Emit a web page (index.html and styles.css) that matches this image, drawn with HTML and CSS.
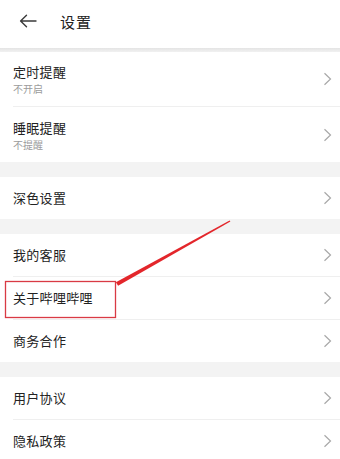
FILE: index.html
```html
<!DOCTYPE html>
<html lang="zh-CN">
<head>
<meta charset="utf-8">
<title>设置</title>
<link rel="stylesheet" href="styles.css">
</head>
<body>
<div class="page">
  <header class="header">
    <svg class="back" width="18" height="14" viewBox="0 0 18 14"><path d="M17 7H1.8M7.5 1.2L1.6 7l5.9 5.8" fill="none" stroke="#3a3a3a" stroke-width="1.4" stroke-linecap="round" stroke-linejoin="round"/></svg>
    <span class="title">设置</span>
  </header>
  <div class="shadow"></div>

  <section class="group">
    <div class="row tall"><div class="inner"><div class="texts"><span class="label">定时提醒</span><span class="sub">不开启</span></div><svg class="chev" width="9" height="14" viewBox="0 0 9 14"><path d="M1.5 1.2L7.5 7l-6 5.8" fill="none" stroke="#a8a8a8" stroke-width="1.2"/></svg></div></div>
    <div class="row tall last"><div class="inner"><div class="texts"><span class="label">睡眠提醒</span><span class="sub">不提醒</span></div><svg class="chev" width="9" height="14" viewBox="0 0 9 14"><path d="M1.5 1.2L7.5 7l-6 5.8" fill="none" stroke="#a8a8a8" stroke-width="1.2"/></svg></div></div>
  </section>
  <div class="gap"></div>

  <section class="group">
    <div class="row last"><div class="inner"><span class="label">深色设置</span><svg class="chev" width="9" height="14" viewBox="0 0 9 14"><path d="M1.5 1.2L7.5 7l-6 5.8" fill="none" stroke="#a8a8a8" stroke-width="1.2"/></svg></div></div>
  </section>
  <div class="gap"></div>

  <section class="group">
    <div class="row"><div class="inner"><span class="label">我的客服</span><svg class="chev" width="9" height="14" viewBox="0 0 9 14"><path d="M1.5 1.2L7.5 7l-6 5.8" fill="none" stroke="#a8a8a8" stroke-width="1.2"/></svg></div></div>
    <div class="row"><div class="inner"><span class="label">关于哔哩哔哩</span><svg class="chev" width="9" height="14" viewBox="0 0 9 14"><path d="M1.5 1.2L7.5 7l-6 5.8" fill="none" stroke="#a8a8a8" stroke-width="1.2"/></svg></div></div>
    <div class="row last"><div class="inner"><span class="label">商务合作</span><svg class="chev" width="9" height="14" viewBox="0 0 9 14"><path d="M1.5 1.2L7.5 7l-6 5.8" fill="none" stroke="#a8a8a8" stroke-width="1.2"/></svg></div></div>
  </section>
  <div class="gap"></div>

  <section class="group">
    <div class="row"><div class="inner"><span class="label">用户协议</span><svg class="chev" width="9" height="14" viewBox="0 0 9 14"><path d="M1.5 1.2L7.5 7l-6 5.8" fill="none" stroke="#a8a8a8" stroke-width="1.2"/></svg></div></div>
    <div class="row last"><div class="inner"><span class="label">隐私政策</span><svg class="chev" width="9" height="14" viewBox="0 0 9 14"><path d="M1.5 1.2L7.5 7l-6 5.8" fill="none" stroke="#a8a8a8" stroke-width="1.2"/></svg></div></div>
  </section>

  <svg class="pointer" width="340" height="459" viewBox="0 0 340 459">
    <rect x="5.5" y="281.5" width="110" height="36" fill="none" stroke="#d93a44" stroke-width="1.3"/>
    <polygon points="230.4,221.6 229.6,220.4 115.9,282.2 118.1,285.8" fill="#e3262b"/>
  </svg>
</div>
</body>
</html>
```

FILE: styles.css
```css
* { box-sizing: border-box; }
html, body { margin: 0; padding: 0; background: #ffffff; }
body {
  font-family: "Noto Sans CJK SC", "Noto Sans", sans-serif;
  color: #222222;
}
.page {
  position: relative;
  width: 340px;
  height: 459px;
  overflow: hidden;
  background: #ffffff;
}
.header {
  height: 48px;
  display: flex;
  align-items: center;
  padding-left: 19px;
  padding-bottom: 6px;
  gap: 23px;
}
.back { display: block; }
.title {
  font-size: 15px;
  color: #222222;
  letter-spacing: 1px;
}
.shadow {
  height: 4px;
  background: linear-gradient(#e4e4e4, #f1f1f1);
}
.group { background: #ffffff; }
.gap { height: 15px; background: #f3f3f3; }
.row {
  padding-left: 13px;
  height: 43px;
}
.row.tall { height: 55px; }
.row.last { height: 42px; }
.row.tall.last { height: 55px; }
.inner {
  height: 100%;
  display: flex;
  align-items: center;
  justify-content: space-between;
  padding-right: 8px;
  border-bottom: 1px solid #efefef;
}
.row.last .inner { border-bottom: none; }
.texts {
  display: flex;
  flex-direction: column;
  gap: 1px;
}
.label {
  font-size: 13px;
  line-height: 18px;
  color: #222222;
  letter-spacing: 0.3px;
}
.sub {
  font-size: 10px;
  line-height: 13px;
  color: #9b9b9b;
}
.chev { display: block; flex: none; }
.pointer {
  position: absolute;
  left: 0;
  top: 0;
}
```
